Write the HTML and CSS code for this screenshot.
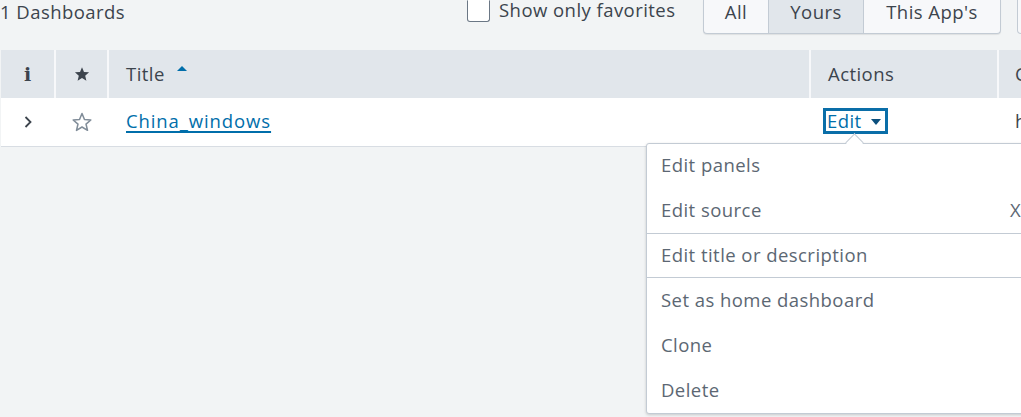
FILE: index.html
```html
<!DOCTYPE html>
<html>
<head>
<meta charset="utf-8">
<link rel="stylesheet" href="styles.css">
</head>
<body>
<div class="page">
  <div class="toolbar">
    <div class="count">1 Dashboards</div>
    <label class="fav"><span class="box"></span><span class="favtext">Show only favorites</span></label>
    <div class="group">
      <span class="seg s1">All</span>
      <span class="seg s2 active">Yours</span>
      <span class="seg s3">This App's</span>
    </div>
    <div class="group2"></div>
  </div>
  <div class="table">
    <div class="row head">
      <div class="cell c1"><span class="info">i</span></div>
      <div class="cell c2">
        <svg width="16" height="16" viewBox="0 0 24 24"><path d="M12 1.8l3 7.1 7.6.6-5.8 5 1.8 7.5L12 18l-6.6 4 1.8-7.5-5.8-5 7.6-.6z" fill="#3c444d"/></svg>
      </div>
      <div class="cell c3">Title <span class="caret"></span></div>
      <div class="cell c4">Actions</div>
      <div class="cell c5">C</div>
    </div>
    <div class="row body">
      <div class="cell c1">
        <svg width="10" height="14" viewBox="0 0 10 14"><path d="M2.5 2l5 5-5 5" fill="none" stroke="#3c444d" stroke-width="1.8"/></svg>
      </div>
      <div class="cell c2">
        <svg width="22" height="22" viewBox="0 0 24 24"><path d="M12 2.8l2.7 6.4 6.9.6-5.2 4.5 1.6 6.8L12 17.5l-6 3.6 1.6-6.8-5.2-4.5 6.9-.6z" fill="none" stroke="#818d99" stroke-width="1.7" stroke-linejoin="round"/></svg>
      </div>
      <div class="cell c3"><a class="link" href="#">China_windows</a></div>
      <div class="cell c4"><span class="edit">Edit <span class="dcaret"></span></span></div>
      <div class="cell c5">h</div>
    </div>
  </div>
  <div class="menu">
    <span class="notch"></span>
    <div class="section s-a">
      <div class="item">Edit panels</div>
      <div class="item">Edit source <span class="key">X</span></div>
    </div>
    <div class="section s-b">
      <div class="item">Edit title or description</div>
    </div>
    <div class="section s-c">
      <div class="item">Set as home dashboard</div>
      <div class="item">Clone</div>
      <div class="item">Delete</div>
    </div>
  </div>
</div>
</body>
</html>
```
FILE: styles.css
```css
html, body {
  margin: 0;
  padding: 0;
}
body {
  background: #f2f4f5;
  font-family: "Open Sans", Lato, sans-serif;
  color: #3c444d;
  width: 1021px;
  height: 417px;
  overflow: hidden;
  letter-spacing: 0.45px;
}
.page {
  position: relative;
  width: 1021px;
  height: 417px;
  overflow: hidden;
}
.toolbar {
  height: 50px;
  display: flex;
  align-items: flex-start;
}
.count {
  flex: none;
  font-size: 18.5px;
  line-height: 24px;
  width: 467px;
}
.fav {
  flex: none;
  display: flex;
  align-items: flex-start;
  gap: 9px;
  font-size: 18.5px;
  line-height: 20px;
  width: 236px;
}
.favtext {
  padding-top: 0;
}
.box {
  flex: none;
  box-sizing: border-box;
  width: 23px;
  height: 22px;
  border: 1px solid #6b7785;
  border-top-color: transparent;
  border-radius: 0 0 3px 3px;
  background: #fff;
}
.group {
  flex: none;
  display: flex;
  height: 33px;
  border: 1px solid #c3cbd4;
  border-top: none;
  border-radius: 0 0 4px 4px;
  background: #f7f8fa;
  box-shadow: 0 1px 1px rgba(0,0,0,0.08);
  overflow: hidden;
}
.seg {
  box-sizing: border-box;
  font-size: 18.5px;
  line-height: 22px;
  padding-top: 1px;
  text-align: center;
  color: #3c444d;
}
.seg + .seg {
  border-left: 1px solid #c3cbd4;
}
.s1 { width: 64px; }
.s2 { width: 95px; }
.s3 { width: 137px; }
.seg.active {
  background: #e1e6eb;
}
.group2 {
  flex: none;
  margin-left: 16px;
  height: 33px;
  width: 40px;
  border: 1px solid #c3cbd4;
  border-top: none;
  border-radius: 0 0 0 4px;
  background: #f7f8fa;
}
.table {
  margin-left: 1px;
}
.row {
  display: flex;
  height: 48px;
}
.row.head {
  background: #e1e6eb;
}
.row.body {
  background: #fff;
  border-bottom: 1px solid #d8dde3;
}
.cell {
  flex: none;
  display: flex;
  align-items: center;
  font-size: 18.5px;
  box-sizing: border-box;
}
.head .cell + .cell {
  border-left: 2px solid #f7f8fa;
}
.body .cell + .cell {
  border-left: 2px solid transparent;
}
.c1 { width: 53px; justify-content: center; }
.c2 { width: 53px; justify-content: center; }
.c3 { width: 702px; padding-left: 17px; }
.c4 { width: 188px; padding-left: 17px; }
.c5 { width: 40px; padding-left: 16px; }
.head .cell { padding-bottom: 2px; }
.body .cell { padding-bottom: 3px; }
.head .c1, .head .c2, .body .c1, .body .c2 { padding-bottom: 0; }
.info {
  font-family: "DejaVu Serif", serif;
  font-weight: bold;
  font-size: 19px;
  letter-spacing: 0;
  color: #3c444d;
}
.caret {
  display: inline-block;
  width: 0;
  height: 0;
  border-left: 5px solid transparent;
  border-right: 5px solid transparent;
  border-bottom: 5px solid #006eaa;
  margin-left: 12px;
  margin-bottom: 10px;
}
.link {
  color: #006eaa;
  letter-spacing: 0.9px;
  text-decoration: underline;
  text-decoration-thickness: 2px;
  text-underline-offset: 3px;
}
.edit {
  display: inline-flex;
  align-items: center;
  border: 3px solid #0a6ea8;
  color: #006eaa;
  padding: 0 4px 1px 1px;
  height: 26px;
  box-sizing: border-box;
  margin-left: -5px;
  margin-top: 1px;
  line-height: 20px;
}
.dcaret {
  display: inline-block;
  width: 0;
  height: 0;
  border-left: 5px solid transparent;
  border-right: 5px solid transparent;
  border-top: 6px solid #0b4f7d;
  margin-left: 9px;
  margin-top: 2px;
}
.menu {
  position: absolute;
  left: 646px;
  top: 143px;
  width: 400px;
  background: #fff;
  border: 1px solid #c3cbd4;
  box-shadow: 0 1px 3px rgba(0,0,0,0.18);
  border-radius: 3px;
}
.notch {
  position: absolute;
  left: 201px;
  top: -8px;
  width: 12px;
  height: 12px;
  background: #fff;
  border-left: 1px solid #c3cbd4;
  border-top: 1px solid #c3cbd4;
  transform: rotate(45deg);
}
.section + .section {
  border-top: 1px solid #c3cbd4;
}
.item {
  height: 45px;
  display: flex;
  align-items: center;
  padding-left: 14px;
  padding-bottom: 3px;
  box-sizing: border-box;
  font-size: 18.5px;
  color: #5c6773;
  position: relative;
}
.s-a .item:first-child { height: 44px; }
.s-b .item { height: 43px; }
.key {
  position: absolute;
  left: 363px;
}
```
